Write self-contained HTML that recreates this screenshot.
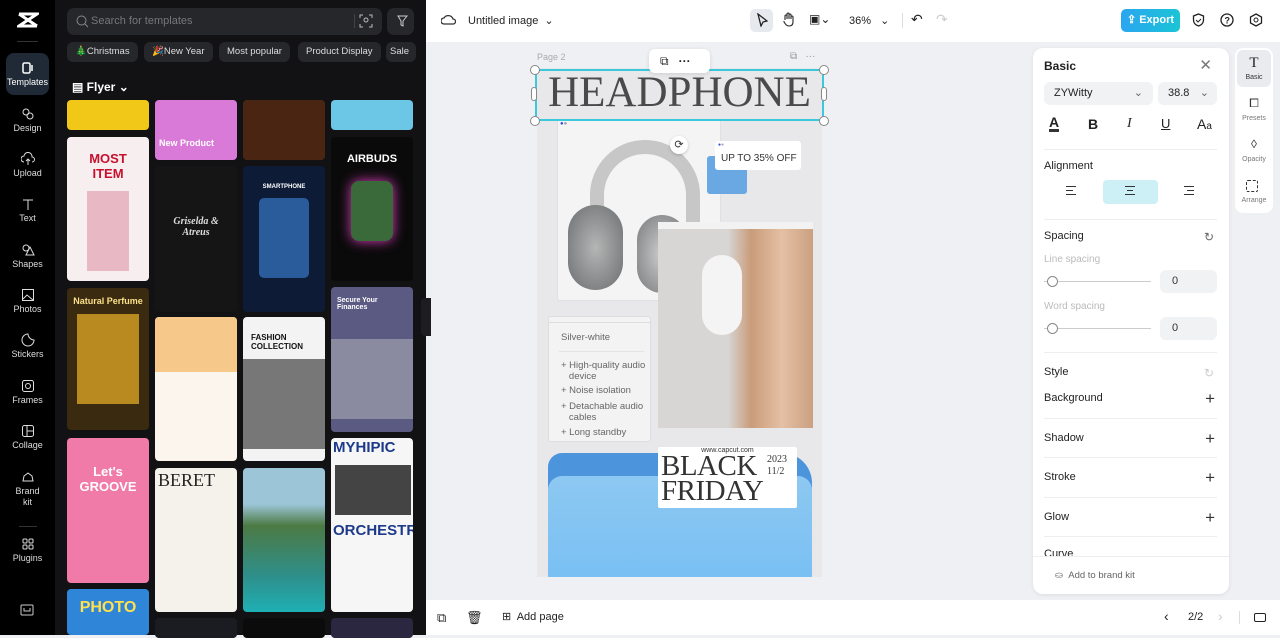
<!DOCTYPE html>
<html><head><meta charset="utf-8"><style>
*{box-sizing:border-box;margin:0;padding:0}
body{width:1280px;height:635px;overflow:hidden;font-family:"Liberation Sans",sans-serif;background:#eef0f3;position:relative}
.abs{position:absolute}
.rail{left:0;top:0;width:55px;height:635px;background:#000}
.ri{position:absolute;left:0;width:55px;text-align:center;color:#ddd;font-size:9px}
.ri svg{display:block;margin:0 auto 2px}
.lp{left:55px;top:0;width:371px;height:635px;background:#121214}
.chip{position:absolute;top:42px;height:20px;border-radius:6px;background:#26272b;color:#ddd;font-size:9.5px;line-height:20px;padding:0 8px;white-space:nowrap}
.card{position:absolute;border-radius:4px;overflow:hidden;font-weight:bold}
.top{left:426px;top:0;width:854px;height:42px;background:#fff}
.bot{left:426px;top:600px;width:854px;height:35px;background:#fff}
.panel{left:1033px;top:48px;width:196px;height:546px;background:#fff;border-radius:10px;box-shadow:0 1px 4px rgba(0,0,0,.08)}
.ptxt{position:absolute;left:11px;font-size:11px;color:#222}
.sep{position:absolute;left:11px;width:173px;height:1px;background:#eceef0}
.plus{position:absolute;right:14px;font-size:17px;color:#333;line-height:1}
</style></head><body>

<div class="abs rail">
 <svg class="abs" style="left:17px;top:11px" width="22" height="18" viewBox="0 0 22 18"><path d="M2 3h18l-18 12h18M2 3l18 12" stroke="#fff" stroke-width="3" fill="none"/></svg>
 <div class="abs" style="left:17px;top:41px;width:21px;height:1px;background:#333"></div>
 <div class="abs" style="left:6px;top:53px;width:43px;height:42px;border-radius:8px;background:#1f2a36"></div>
 <div class="ri" style="top:61px;color:#fff"><svg width="14" height="14" viewBox="0 0 14 14"><rect x="2" y="2" width="7" height="10" rx="1.5" stroke="#fff" fill="none" stroke-width="1.5"/><path d="M11 4v6" stroke="#fff" stroke-width="1.5"/></svg>Templates</div>
 <div class="ri" style="top:107px"><svg width="14" height="14"><circle cx="5" cy="5" r="3" stroke="#ddd" fill="none"/><circle cx="9" cy="9" r="3" stroke="#ddd" fill="none"/></svg>Design</div>
 <div class="ri" style="top:152px"><svg width="14" height="14"><path d="M3 10a3 3 0 010-6 4 4 0 018 1 2.5 2.5 0 010 5M7 7v6M5 9l2-2 2 2" stroke="#ddd" fill="none"/></svg>Upload</div>
 <div class="ri" style="top:197px"><svg width="14" height="14"><path d="M2 3h10M7 3v10" stroke="#ddd" fill="none"/></svg>Text</div>
 <div class="ri" style="top:243px"><svg width="14" height="14"><circle cx="5" cy="5" r="3" stroke="#ddd" fill="none"/><path d="M9 4l4 8H5z" stroke="#ddd" fill="none"/></svg>Shapes</div>
 <div class="ri" style="top:288px"><svg width="14" height="14"><rect x="1.5" y="1.5" width="11" height="11" stroke="#ddd" fill="none"/><path d="M2 11l4-4 6 5" stroke="#ddd" fill="none"/></svg>Photos</div>
 <div class="ri" style="top:333px"><svg width="14" height="14"><path d="M7 1a6 6 0 106 6c-3 0-6-3-6-6z" stroke="#ddd" fill="none"/></svg>Stickers</div>
 <div class="ri" style="top:379px"><svg width="14" height="14"><rect x="1.5" y="1.5" width="11" height="11" rx="2" stroke="#ddd" fill="none"/><circle cx="7" cy="7" r="2.5" stroke="#ddd" fill="none"/></svg>Frames</div>
 <div class="ri" style="top:424px"><svg width="14" height="14"><rect x="1.5" y="1.5" width="11" height="11" rx="2" stroke="#ddd" fill="none"/><path d="M6 2v10M6 7h6" stroke="#ddd"/></svg>Collage</div>
 <div class="ri" style="top:470px;line-height:11px"><svg width="14" height="14"><path d="M2 11h10l-1-5-4-3-4 3z" stroke="#ddd" fill="none"/></svg>Brand<br>kit</div>
 <div class="abs" style="left:19px;top:526px;width:18px;height:1px;background:#333"></div>
 <div class="ri" style="top:537px"><svg width="14" height="14"><rect x="2" y="2" width="4" height="4" rx="1" stroke="#ddd" fill="none"/><rect x="8" y="2" width="4" height="4" rx="1" stroke="#ddd" fill="none"/><rect x="2" y="8" width="4" height="4" rx="1" stroke="#ddd" fill="none"/><rect x="8" y="8" width="4" height="4" rx="1" stroke="#ddd" fill="none"/></svg>Plugins</div>
 <svg class="abs" style="left:20px;top:604px" width="14" height="12"><rect x="1" y="1" width="12" height="10" rx="1" stroke="#ccc" fill="none"/><path d="M4 4v3h6V4" stroke="#ccc" fill="none"/></svg>
</div>

<div class="abs lp">
 <div class="abs" style="left:12px;top:8px;width:315px;height:27px;border-radius:7px;background:#26272b"></div>
 <svg class="abs" style="left:21px;top:15px" width="13" height="13"><circle cx="5.5" cy="5.5" r="4.5" stroke="#888" fill="none"/><path d="M9 9l3 3" stroke="#888"/></svg>
 <div class="abs" style="left:36px;top:15px;color:#777;font-size:11px">Search for templates</div>
 <div class="abs" style="left:299px;top:14px;width:1px;height:14px;background:#444"></div>
 <svg class="abs" style="left:304px;top:14px" width="14" height="14"><path d="M1 4V1h3M10 1h3v3M13 10v3h-3M4 13H1v-3" stroke="#bbb" fill="none"/><circle cx="7" cy="6" r="2" stroke="#bbb" fill="none"/></svg>
 <div class="abs" style="left:332px;top:8px;width:27px;height:27px;border-radius:7px;background:#26272b"></div>
 <svg class="abs" style="left:339px;top:14px" width="14" height="14"><path d="M4 2h9l-4 5v5l-2-1V7z" stroke="#ccc" fill="none"/></svg>
 <div class="chip" style="left:12px">🎄Christmas</div>
 <div class="chip" style="left:89px">🎉New Year</div>
 <div class="chip" style="left:164px">Most popular</div>
 <div class="chip" style="left:243px">Product Display</div>
 <div class="chip" style="left:331px;width:30px;padding:0 4px">Sale</div>
 <div class="abs" style="left:17px;top:80px;color:#fff;font-weight:bold;font-size:12px">▤ Flyer ⌄</div>

 <div class="card" style="left:12px;top:100px;width:82px;height:30px;background:#f2c818"></div>
 <div class="card" style="left:12px;top:137px;width:82px;height:144px;background:#f7eef0;color:#c8102e;font-size:13px;text-align:center;padding-top:14px">MOST<br>ITEM<div style="height:80px;margin:10px 20px 0;background:#e8b9c4"></div></div>
 <div class="card" style="left:12px;top:288px;width:82px;height:142px;background:#3a2a10;color:#fce08a;font-size:9px;text-align:center;padding-top:8px">Natural Perfume<div style="height:90px;margin:8px 10px;background:#b88a20"></div></div>
 <div class="card" style="left:12px;top:438px;width:82px;height:145px;background:#f07aa8;color:#fff;font-size:13px;text-align:center;padding-top:26px">Let's<br>GROOVE</div>
 <div class="card" style="left:12px;top:589px;width:82px;height:46px;background:#2f86d8;color:#ffe14d;font-size:16px;text-align:center;padding-top:10px">PHOTO</div>

 <div class="card" style="left:100px;top:100px;width:82px;height:60px;background:#d97ad8;color:#fff;font-size:9px;padding:38px 0 0 4px">New Product</div>
 <div class="card" style="left:100px;top:166px;width:82px;height:146px;background:#151515;color:#ddd;font-size:10px;font-family:'Liberation Serif',serif;font-style:italic;text-align:center;padding-top:50px">Griselda &amp;<br>Atreus</div>
 <div class="card" style="left:100px;top:317px;width:82px;height:144px;background:#fbf5ee"><div style="height:55px;background:#f6c88a;margin:0"></div></div>
 <div class="card" style="left:100px;top:468px;width:82px;height:144px;background:#f4f2ea;color:#222;font-size:18px;font-family:'Liberation Serif',serif;font-weight:normal;padding:2px 0 0 3px">BERET</div>
 <div class="card" style="left:100px;top:618px;width:82px;height:20px;background:#1b1b22"></div>

 <div class="card" style="left:188px;top:100px;width:82px;height:60px;background:#4a2612"></div>
 <div class="card" style="left:188px;top:166px;width:82px;height:146px;background:#0d1b36;color:#fff;font-size:6px;text-align:center;padding-top:18px">SMARTPHONE<div style="height:80px;margin:8px 16px;background:#2a5b9a;border-radius:5px"></div></div>
 <div class="card" style="left:188px;top:317px;width:82px;height:144px;background:#f3f3f3;color:#111;font-size:8px;padding:16px 0 0 8px">FASHION<br>COLLECTION<div style="height:90px;margin:8px 0 0 -8px;background:#777"></div></div>
 <div class="card" style="left:188px;top:468px;width:82px;height:144px;background:linear-gradient(#9cc6d8 0 25%,#4c7a44 40%,#2e8f8a 75%,#1fb0b5)"></div>
 <div class="card" style="left:188px;top:618px;width:82px;height:20px;background:#0b0b0b"></div>

 <div class="card" style="left:276px;top:100px;width:82px;height:30px;background:#6cc6e5"></div>
 <div class="card" style="left:276px;top:137px;width:82px;height:144px;background:#0a0a0a;color:#fff;font-size:11px;text-align:center;padding-top:16px">AIRBUDS<div style="height:60px;margin:16px 20px;background:#3a6a3a;border-radius:8px;box-shadow:0 0 12px #e040c0"></div></div>
 <div class="card" style="left:276px;top:287px;width:82px;height:145px;background:#5b5a82;color:#fff;font-size:7px;padding:10px 0 0 6px">Secure Your<br>Finances<div style="height:80px;margin:28px 0 0 -6px;background:#8a8aa0"></div></div>
 <div class="card" style="left:276px;top:438px;width:82px;height:174px;background:#f6f6f6;color:#1d3a8a;font-size:15px;padding:2px 0 0 2px;line-height:1.1">MYHIPIC<div style="height:50px;margin:8px 2px;background:#444"></div>ORCHESTRA</div>
 <div class="card" style="left:276px;top:618px;width:82px;height:20px;background:#2c2740"></div>
 <div class="abs" style="left:366px;top:298px;width:10px;height:38px;background:#1d1d20;border-radius:4px 0 0 4px"></div>
</div>

<div class="abs top">
 <svg class="abs" style="left:15px;top:13px" width="15" height="14"><path d="M3 11a3 3 0 010-6 5 5 0 019 1 2.5 2.5 0 010 5z" stroke="#333" fill="none" stroke-width="1.3"/></svg>
 <div class="abs" style="left:42px;top:14px;font-size:11px;color:#222">Untitled image&nbsp;&nbsp;⌄</div>
 <div class="abs" style="left:324px;top:9px;width:23px;height:23px;border-radius:5px;background:#e6e9ee"></div>
 <svg class="abs" style="left:330px;top:13px" width="12" height="14"><path d="M2 1l9 7-4 1-2 4z" stroke="#222" fill="none" stroke-width="1.3"/></svg>
 <svg class="abs" style="left:356px;top:12px" width="13" height="15"><path d="M3 8V4a1 1 0 012 0v3V2a1 1 0 012 0v5V3a1 1 0 012 0v4-2a1 1 0 012 0v5c0 3-2 4-4 4s-3-1-5-4L2 9" stroke="#222" fill="none" stroke-width="1.1"/></svg>
 <div class="abs" style="left:383px;top:12px;font-size:12px;color:#222">▣⌄</div>
 <div class="abs" style="left:423px;top:14px;font-size:11px;color:#222">36%&nbsp;&nbsp;&nbsp;⌄</div>
 <div class="abs" style="left:476px;top:13px;width:1px;height:15px;background:#ddd"></div>
 <div class="abs" style="left:485px;top:11px;font-size:14px;color:#222">↶</div>
 <div class="abs" style="left:510px;top:11px;font-size:14px;color:#ccc">↷</div>
 <div class="abs" style="left:695px;top:9px;width:59px;height:23px;border-radius:5px;background:linear-gradient(90deg,#2aa6f0,#1bc4d6);color:#fff;font-size:11px;font-weight:bold;line-height:23px;text-align:center">⇪ Export</div>
 <svg class="abs" style="left:766px;top:13px" width="13" height="15"><path d="M6.5 1l5 2v4c0 3-2 5-5 6-3-1-5-3-5-6V3z" stroke="#222" fill="none" stroke-width="1.3"/><path d="M4 7l2 2 3-3" stroke="#222" fill="none"/></svg>
 <svg class="abs" style="left:794px;top:13px" width="14" height="14"><circle cx="7" cy="7" r="6" stroke="#222" fill="none" stroke-width="1.3"/><text x="4.5" y="10.5" font-size="9" font-family="Liberation Sans" font-weight="bold" fill="#222">?</text></svg>
 <svg class="abs" style="left:823px;top:13px" width="14" height="14"><path d="M7 1l5.5 3v6L7 13l-5.5-3V4z" stroke="#222" fill="none" stroke-width="1.3"/><circle cx="7" cy="7" r="2" stroke="#222" fill="none"/></svg>
</div>

<!-- canvas page -->
<div class="abs" style="left:537px;top:52px;font-size:9px;color:#aaa">Page 2</div>
<div class="abs" style="left:790px;top:51px;font-size:10px;color:#999">⧉&nbsp;&nbsp;&nbsp;···</div>
<div class="abs" style="left:537px;top:68px;width:285px;height:509px;background:#e8e8ea"></div>
<div class="abs" style="left:557px;top:119px;width:164px;height:182px;background:#f4f4f4;border:1px solid #e0e0e0;border-radius:3px"></div>
<div class="abs" style="left:560px;top:121px;font-size:6px;color:#2a4de0">●<span style="color:#999">●</span></div>
<!-- headphone -->
<div class="abs" style="left:590px;top:140px;width:110px;height:90px;border:14px solid #c7c7c7;border-bottom:none;border-radius:60px 60px 0 0"></div>
<div class="abs" style="left:568px;top:205px;width:55px;height:85px;border-radius:28px;background:radial-gradient(#b5b5b5,#6a6d70)"></div>
<div class="abs" style="left:637px;top:215px;width:50px;height:78px;border-radius:25px;background:radial-gradient(#ccc,#777a7d)"></div>
<div class="abs" style="left:670px;top:136px;width:18px;height:18px;border-radius:50%;background:#fff;box-shadow:0 1px 3px rgba(0,0,0,.2);font-size:11px;text-align:center;line-height:18px;color:#333">⟳</div>
<div class="abs" style="left:707px;top:156px;width:40px;height:38px;background:#6aa8e4;border-radius:3px"></div>
<div class="abs" style="left:715px;top:141px;width:86px;height:29px;background:#fff;border-radius:3px;font-size:10px;color:#333;padding:12px 0 0 6px">UP TO 35% OFF</div>
<div class="abs" style="left:718px;top:142px;font-size:5px;color:#2a4de0">●<span style="color:#aaa">●</span></div>
<!-- woman -->
<div class="abs" style="left:658px;top:222px;width:155px;height:206px;background:linear-gradient(90deg,#d8d6d4 0 45%,#c99c7a 60%,#e5c0a4 80%,#caa080)"></div>
<div class="abs" style="left:658px;top:222px;width:155px;height:7px;background:#f2f2f2"></div>
<div class="abs" style="left:702px;top:255px;width:40px;height:80px;border-radius:20px;background:#f4f4f4"></div>
<!-- features -->
<div class="abs" style="left:548px;top:316px;width:103px;height:126px;background:#f3f3f3;border:1px solid #ddd;border-radius:3px;font-size:9.5px;color:#666;padding:15px 0 0 12px;line-height:11px">Silver-white<div style="height:1px;background:#e4e4e4;margin:8px 6px 8px -2px"></div>+ High-quality audio<br>&nbsp;&nbsp;&nbsp;device<br><div style="height:3px"></div>+ Noise isolation<div style="height:5px"></div>+ Detachable audio<br>&nbsp;&nbsp;&nbsp;cables<div style="height:4px"></div>+ Long standby</div>
<div class="abs" style="left:548px;top:318px;width:103px;height:5px;border-bottom:1px solid #ddd"></div>
<!-- folder -->
<div class="abs" style="left:548px;top:453px;width:264px;height:124px;background:#4c94dc;border-radius:14px 30px 0 0"></div>
<div class="abs" style="left:548px;top:476px;width:264px;height:101px;background:linear-gradient(#8dc8f2,#7ac0f3);border-radius:14px 14px 0 0"></div>
<div class="abs" style="left:658px;top:447px;width:139px;height:61px;background:#fff;border-radius:2px;font-family:'Liberation Serif',serif;color:#333"><div style="font-size:7px;text-align:center;font-family:'Liberation Sans'">www.capcut.com</div><div style="font-size:29px;line-height:25px;padding-left:3px;letter-spacing:-0.5px">BLACK<br>FRIDAY</div><div style="position:absolute;left:109px;top:7px;font-size:10px;line-height:12px">2023<br>11/2</div></div>
<!-- selection -->
<div class="abs" style="left:535px;top:69px;width:289px;height:52px;border:2px solid #3cc8dc"></div>
<div class="abs" style="left:535px;top:68px;width:289px;text-align:center;font-family:'Liberation Serif',serif;font-size:43px;color:#4a4a4a;line-height:50px;letter-spacing:0">HEADPHONE</div>
<div class="abs" style="left:530px;top:65px;width:10px;height:10px;border-radius:50%;background:#fff;border:1px solid #888"></div>
<div class="abs" style="left:819px;top:65px;width:10px;height:10px;border-radius:50%;background:#fff;border:1px solid #888"></div>
<div class="abs" style="left:530px;top:116px;width:10px;height:10px;border-radius:50%;background:#fff;border:1px solid #888"></div>
<div class="abs" style="left:819px;top:116px;width:10px;height:10px;border-radius:50%;background:#fff;border:1px solid #888"></div>
<div class="abs" style="left:531px;top:87px;width:6px;height:14px;border-radius:3px;background:#fff;border:1px solid #888"></div>
<div class="abs" style="left:821px;top:87px;width:6px;height:14px;border-radius:3px;background:#fff;border:1px solid #888"></div>
<div class="abs" style="left:649px;top:49px;width:61px;height:24px;border-radius:6px;background:#fff;box-shadow:0 1px 4px rgba(0,0,0,.12);font-size:12px;color:#222;line-height:24px;padding-left:11px">⧉&nbsp;&nbsp;&nbsp;<b>···</b></div>

<!-- right panel -->
<div class="abs panel">
 <div class="ptxt" style="top:11px;font-weight:bold;font-size:12px">Basic</div>
 <div class="abs" style="right:17px;top:8px;font-size:15px;color:#777">✕</div>
 <div class="abs" style="left:11px;top:34px;width:109px;height:23px;border-radius:6px;background:#f1f2f4;font-size:11px;line-height:23px;padding-left:10px;color:#222">ZYWitty<span style="position:absolute;right:10px;color:#666">⌄</span></div>
 <div class="abs" style="left:125px;top:34px;width:59px;height:23px;border-radius:6px;background:#f1f2f4;font-size:11px;line-height:23px;padding-left:10px;color:#222">38.8<span style="position:absolute;right:8px;color:#666">⌄</span></div>
 <div class="abs" style="left:16px;top:67px;font-size:14px;color:#222;font-weight:bold;border-bottom:3px solid #333;line-height:14px">A</div>
 <div class="abs" style="left:55px;top:68px;font-size:14px;font-weight:bold;color:#222">B</div>
 <div class="abs" style="left:94px;top:68px;font-size:14px;font-style:italic;font-family:'Liberation Serif',serif;color:#222">I</div>
 <div class="abs" style="left:128px;top:68px;font-size:13px;color:#222;text-decoration:underline">U</div>
 <div class="abs" style="left:164px;top:68px;font-size:14px;color:#222">A<span style="font-size:10px">a</span></div>
 <div class="sep" style="top:101px"></div>
 <div class="ptxt" style="top:112px">Alignment</div>
 <div class="abs" style="left:70px;top:132px;width:55px;height:24px;border-radius:4px;background:#cdf0f7"></div>
 <div class="abs" style="left:33px;top:138px;width:10px;height:9px;border-top:1px solid #333;border-bottom:1px solid #333"><div style="margin-top:3px;width:7px;height:1px;background:#333"></div></div>
 <div class="abs" style="left:92px;top:138px;width:10px;height:9px;border-top:1px solid #333;border-bottom:1px solid #333"><div style="margin:3px auto 0;width:6px;height:1px;background:#333"></div></div>
 <div class="abs" style="left:151px;top:138px;width:10px;height:9px;border-top:1px solid #333;border-bottom:1px solid #333"><div style="margin:3px 0 0 3px;width:7px;height:1px;background:#333"></div></div>
 <div class="sep" style="top:171px"></div>
 <div class="ptxt" style="top:182px">Spacing</div>
 <div class="abs" style="right:15px;top:182px;font-size:12px;color:#666">↻</div>
 <div class="ptxt" style="top:206px;font-size:10px;color:#bbb">Line spacing</div>
 <div class="abs" style="left:11px;top:233px;width:107px;height:1px;background:#ccc"></div>
 <div class="abs" style="left:14px;top:228px;width:11px;height:11px;border-radius:50%;background:#fff;border:1px solid #888"></div>
 <div class="abs" style="left:127px;top:222px;width:57px;height:23px;border-radius:6px;background:#f1f2f4;font-size:11px;line-height:23px;padding-left:12px;color:#333">0</div>
 <div class="ptxt" style="top:253px;font-size:10px;color:#bbb">Word spacing</div>
 <div class="abs" style="left:11px;top:280px;width:107px;height:1px;background:#ccc"></div>
 <div class="abs" style="left:14px;top:275px;width:11px;height:11px;border-radius:50%;background:#fff;border:1px solid #888"></div>
 <div class="abs" style="left:127px;top:269px;width:57px;height:23px;border-radius:6px;background:#f1f2f4;font-size:11px;line-height:23px;padding-left:12px;color:#333">0</div>
 <div class="sep" style="top:304px"></div>
 <div class="ptxt" style="top:318px">Style</div>
 <div class="abs" style="right:15px;top:318px;font-size:12px;color:#ccc">↻</div>
 <div class="ptxt" style="top:344px">Background</div><div class="plus" style="top:342px">+</div>
 <div class="sep" style="top:370px"></div>
 <div class="ptxt" style="top:384px">Shadow</div><div class="plus" style="top:382px">+</div>
 <div class="sep" style="top:409px"></div>
 <div class="ptxt" style="top:423px">Stroke</div><div class="plus" style="top:421px">+</div>
 <div class="sep" style="top:449px"></div>
 <div class="ptxt" style="top:463px">Glow</div><div class="plus" style="top:461px">+</div>
 <div class="sep" style="top:488px"></div>
 <div class="abs" style="left:11px;top:500px;width:180px;height:8px;overflow:hidden;font-size:11px;color:#222">Curve</div>
 <div class="abs" style="left:0;top:508px;width:196px;height:1px;background:#eee"></div>
 <div class="abs" style="left:22px;top:522px;font-size:9.5px;color:#666">⛀&nbsp;&nbsp;Add to brand kit</div>
</div>
<div class="abs" style="left:1235px;top:48px;width:38px;height:165px;background:#fff;border-radius:8px"></div>
<div class="abs" style="left:1237px;top:50px;width:34px;height:37px;background:#e9ebee;border-radius:6px"></div>
<div class="abs" style="left:1235px;top:55px;width:38px;text-align:center;font-size:15px;color:#222;font-family:'Liberation Serif',serif">T</div>
<div class="abs" style="left:1235px;top:74px;width:38px;text-align:center;font-size:7px;color:#333">Basic</div>
<div class="abs" style="left:1235px;top:96px;width:38px;text-align:center;font-size:12px;color:#333">⧠</div>
<div class="abs" style="left:1235px;top:115px;width:38px;text-align:center;font-size:7px;color:#777">Presets</div>
<div class="abs" style="left:1235px;top:137px;width:38px;text-align:center;font-size:12px;color:#333">◊</div>
<div class="abs" style="left:1235px;top:156px;width:38px;text-align:center;font-size:7px;color:#777">Opacity</div>
<div class="abs" style="left:1246px;top:180px;width:12px;height:12px;border:1px dashed #333;border-radius:2px"></div>
<div class="abs" style="left:1235px;top:197px;width:38px;text-align:center;font-size:7px;color:#777">Arrange</div>

<div class="abs bot">
 <div class="abs" style="left:11px;top:10px;font-size:13px;color:#222">⧉</div>
 <div class="abs" style="left:40px;top:10px;font-size:13px;color:#222">🗑</div>
 <div class="abs" style="left:76px;top:10px;font-size:11px;color:#222">⊞&nbsp; Add page</div>
 <div class="abs" style="left:738px;top:8px;font-size:14px;color:#222">‹</div>
 <div class="abs" style="left:762px;top:11px;font-size:11px;color:#222">2/2</div>
 <div class="abs" style="left:792px;top:8px;font-size:14px;color:#ccc">›</div>
 <div class="abs" style="left:813px;top:11px;width:1px;height:13px;background:#ddd"></div>
 <div class="abs" style="left:828px;top:13px;width:12px;height:9px;border:1.5px solid #222;border-radius:2px"></div>
</div>
</body></html>
